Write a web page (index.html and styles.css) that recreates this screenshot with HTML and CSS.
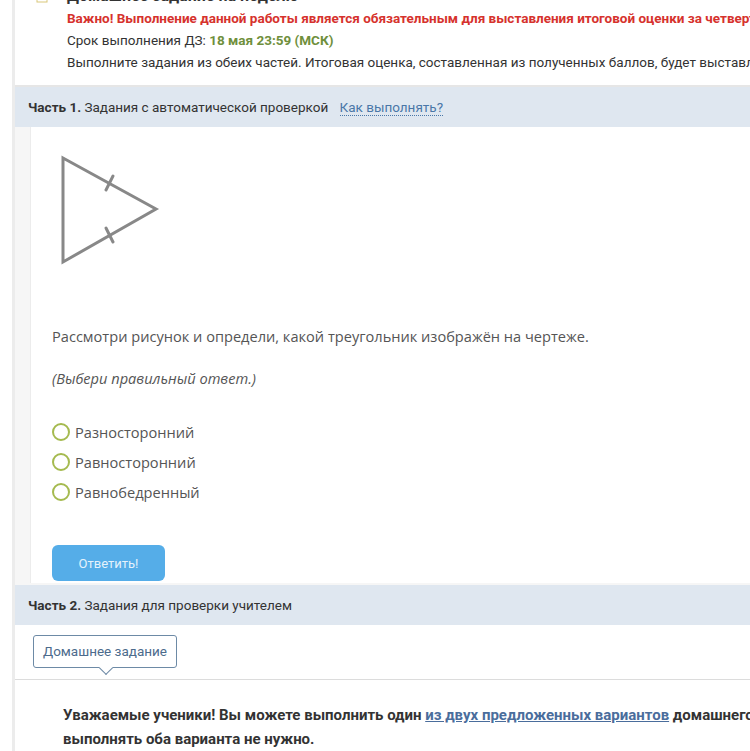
FILE: index.html
```html
<!DOCTYPE html>
<html lang="ru">
<head>
    <meta charset="UTF-8">
    <title>Домашнее задание</title>
    <link rel="stylesheet" href="styles.css">
</head>
<body>
    <div class="page">
        <div class="intro">
            <div class="intro-icon">
                <svg width="14" height="14" viewBox="0 0 14 14">
                    <rect x="2" y="1" width="10" height="12" fill="none" stroke="#d9c77a" stroke-width="1"/>
                    <line x1="4" y1="5" x2="10" y2="5" stroke="#d9c77a"/>
                    <line x1="4" y1="8" x2="10" y2="8" stroke="#d9c77a"/>
                </svg>
            </div>
            <div class="intro-text">
                <div class="title">Домашнее задание на неделю</div>
                <div class="important">Важно! Выполнение данной работы является обязательным для выставления итоговой оценки за четверть.</div>
                <div>Срок выполнения ДЗ: <span class="deadline">18 мая 23:59 (МСК)</span></div>
                <div>Выполните задания из обеих частей. Итоговая оценка, составленная из полученных баллов, будет выставлена в журнал.</div>
            </div>
        </div>

        <div class="part-header">
            <b>Часть 1.</b> Задания с автоматической проверкой <a class="how" href="#">Как выполнять?</a>
        </div>

        <div class="part-body">
            <div class="task">
                <svg class="figure" width="110" height="120" viewBox="0 0 110 120">
                    <polygon points="12,9 105,60 12,113" fill="none" stroke="#888" stroke-width="3" stroke-linejoin="miter"/>
                    <line x1="62" y1="27" x2="55" y2="41" stroke="#888" stroke-width="3" stroke-linecap="round"/>
                    <line x1="55" y1="79" x2="62" y2="93" stroke="#888" stroke-width="3" stroke-linecap="round"/>
                </svg>

                <p class="question">Рассмотри рисунок и определи, какой треугольник изображён на чертеже.</p>
                <p class="hint">(Выбери правильный ответ.)</p>

                <div class="options">
                    <label class="option"><span class="radio"></span>Разносторонний</label>
                    <label class="option"><span class="radio"></span>Равносторонний</label>
                    <label class="option"><span class="radio"></span>Равнобедренный</label>
                </div>

                <button class="answer">Ответить!</button>
            </div>
        </div>

        <div class="part-header">
            <b>Часть 2.</b> Задания для проверки учителем
        </div>

        <div class="tabs">
            <div class="tab">Домашнее задание</div>
        </div>

        <div class="teacher-text">
            <span class="line">Уважаемые ученики! Вы можете выполнить один <a href="#">из двух предложенных вариантов</a> домашнего задания,</span><br>
            <span class="line">выполнять оба варианта не нужно.</span>
        </div>
    </div>
</body>
</html>
```

FILE: styles.css
```css
body {
    margin: 0;
    background: #fff;
    font-family: Roboto, "Liberation Sans", sans-serif;
    font-size: 13.5px;
    color: #333;
    overflow: hidden;
}

.page {
    margin-left: 12px;
    margin-top: -15px;
    border-left: 3px solid #ececec;
}

.intro {
    display: flex;
    padding: 0 0 12px 20px;
    border-bottom: 2px solid #e6e6e6;
    white-space: nowrap;
}

.intro-icon {
    flex-shrink: 0;
    width: 32px;
    padding-top: 4px;
}

.intro-text {
    line-height: 22px;
}

.intro-text .title {
    font-weight: bold;
    font-size: 16px;
}

.important {
    color: #d6322d;
    font-weight: bold;
}

.deadline {
    color: #6f8f3c;
    font-weight: bold;
}

.part-header {
    background: #dfe7f0;
    height: 40px;
    line-height: 40px;
    padding-left: 13px;
    white-space: nowrap;
}

.how {
    color: #4a77a8;
    text-decoration: none;
    border-bottom: 1px dotted #4a77a8;
    margin-left: 8px;
}

.part-body {
    background: #f6f6f6;
    padding: 0 0 2px 15px;
}

.task {
    background: #fff;
    border-left: 1px solid #ececec;
    padding: 22px 0 0 21px;
    height: 434px;
}

.figure {
    display: block;
    margin-left: -1px;
}

.question {
    font-family: "Open Sans", sans-serif;
    font-size: 14.6px;
    color: #555;
    margin: 57px 0 0;
    line-height: 20px;
}

.hint {
    font-family: "Open Sans", sans-serif;
    font-size: 14.6px;
    font-style: italic;
    color: #555;
    margin: 22px 0 0;
    line-height: 20px;
}

.options {
    margin-top: 29px;
}

.option {
    display: flex;
    align-items: center;
    height: 30px;
    font-family: "Open Sans", sans-serif;
    font-size: 14.6px;
    color: #555;
}

.radio {
    width: 14px;
    height: 14px;
    border: 2px solid #a5ba4f;
    border-radius: 50%;
    margin-right: 5px;
}

.answer {
    margin-top: 38px;
    width: 113px;
    height: 36px;
    background: #55ade8;
    border: none;
    border-radius: 6px;
    color: #e4f2fc;
    font-family: Roboto, sans-serif;
    font-size: 13px;
}

.tabs {
    height: 55px;
    border-bottom: 1px solid #dcdcdc;
    padding: 10px 0 0 18px;
    box-sizing: border-box;
}

.tab {
    position: relative;
    display: inline-block;
    border: 1px solid #6d8aa6;
    border-radius: 3px;
    padding: 0 9px;
    height: 31px;
    line-height: 31px;
    color: #4c6b8c;
    font-size: 13.5px;
    background: #fff;
}

.tab::after {
    content: "";
    position: absolute;
    left: 67px;
    bottom: -6px;
    width: 9px;
    height: 9px;
    background: #fff;
    border-right: 1px solid #6d8aa6;
    border-bottom: 1px solid #6d8aa6;
    transform: rotate(45deg);
}

.teacher-text {
    padding: 23px 0 0 48px;
    font-weight: bold;
    line-height: 24px;
    font-size: 15px;
    white-space: nowrap;
}

.teacher-text a {
    color: #4a6d9c;
}
```
